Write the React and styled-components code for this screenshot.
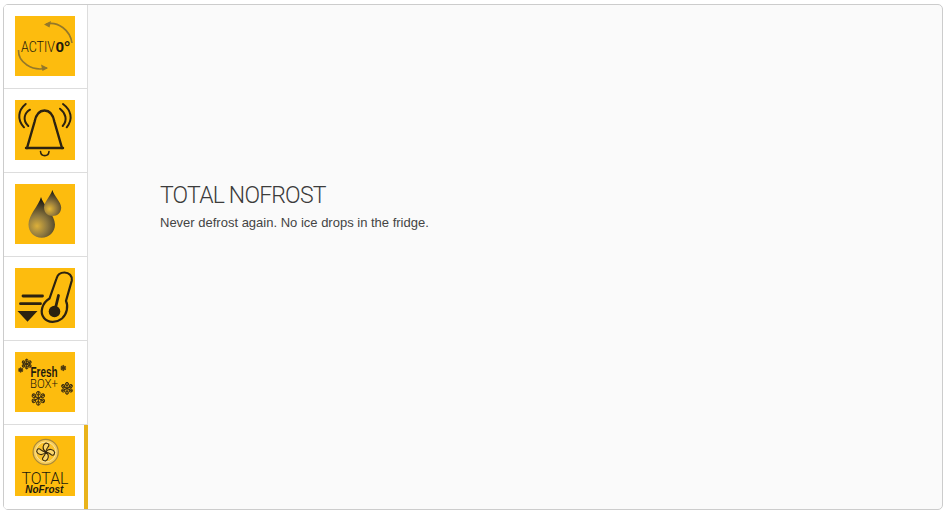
import React, { useState } from 'react';
import styled, { createGlobalStyle } from 'styled-components';

const GlobalStyle = createGlobalStyle`
  html, body {
    margin: 0;
    padding: 0;
    background: #fff;
  }
  body {
    font-family: "Liberation Sans", Arial, sans-serif;
  }
`;

const Page = styled.div`
  box-sizing: border-box;
  width: 945px;
  height: 513px;
  padding: 4px 2px 3px 3px;
`;

const Card = styled.div`
  box-sizing: border-box;
  display: flex;
  height: 100%;
  border: 1px solid #ccc;
  border-radius: 5px;
  overflow: hidden;
  background: #fafafa;
`;

const TabList = styled.div`
  display: flex;
  flex-direction: column;
  flex: none;
  width: 84px;
  background: #fff;
`;

const Tab = styled.button`
  box-sizing: border-box;
  display: flex;
  align-items: flex-start;
  flex: ${(p) => (p.$last ? '1 1 0' : 'none')};
  height: ${(p) => (p.$last ? 'auto' : '84px')};
  width: 84px;
  padding: 11px 0 0 11px;
  margin: 0;
  background: #fff;
  border: 0;
  border-bottom: ${(p) => (p.$last ? '0' : '1px solid #ddd')};
  border-right: ${(p) => (p.$active ? '4px solid #e9b31a' : '1px solid #ddd')};
  cursor: pointer;
`;

const Tile = styled.svg`
  display: block;
  flex: none;
  width: 60px;
  height: 60px;
  background: #fdbc0e;
`;

const Panel = styled.div`
  flex: 1;
  padding: 177px 0 0 72px;
`;

const Title = styled.h2`
  margin: 0 0 4px;
  font-family: "Roboto", sans-serif;
  font-weight: 300;
  font-size: 23px;
  line-height: 28px;
  letter-spacing: -0.8px;
  color: #3c3c3c;
`;

const Text = styled.p`
  margin: 0;
  font-size: 13px;
  line-height: 18px;
  color: #444;
`;

const Flake = ({ x, y, r, w = 1 }) => (
  <g transform={`translate(${x} ${y})`} stroke="#3a2c10" strokeWidth={w} fill="none">
    {[0, 60, 120].map((a) => (
      <line key={a} x1={0} y1={-r} x2={0} y2={r} transform={`rotate(${a})`} />
    ))}
    {[0, 60, 120, 180, 240, 300].map((a) => (
      <circle key={a} cx={0} cy={-r * 0.72} r={r * 0.26} transform={`rotate(${a})`} />
    ))}
  </g>
);

const ActivIcon = () => (
  <Tile viewBox="0 0 60 60">
    <g fill="none" stroke="#94782a" strokeWidth="1.6">
      <path d="M31 8 C43 5 55 14 57 27" />
      <path d="M3.5 34 C3 46 17 56 32 52" />
    </g>
    <path d="M29 8.5 L36 5 L34.5 11.5 Z" fill="#94782a" />
    <path d="M33 52 L26 48.5 L27.5 55 Z" fill="#94782a" />
    <text x="6" y="35.5" fontFamily="Roboto, sans-serif" fontWeight="300" fontSize="14.5" textLength="34" lengthAdjust="spacingAndGlyphs" fill="#1e1a0c">ACTIV</text>
    <text x="40.5" y="35.5" fontFamily="Liberation Sans, sans-serif" fontWeight="700" fontSize="15.5" fill="#1e1a0c">0°</text>
  </Tile>
);

const BellIcon = () => (
  <Tile viewBox="0 0 60 60">
    <g fill="none" stroke="#2c2210" strokeLinecap="round">
      <path strokeWidth="2.4" d="M11 48 H48" />
      <path strokeWidth="2.4" d="M12 48 L19.5 22 C21 14 25 10.5 29.5 10.5 C34 10.5 38 14 39.5 22 L47 48" />
      <path strokeWidth="1.6" d="M25.5 51.5 C26 57 33.5 57 34 51.5" />
      <path strokeWidth="2" d="M10.7 4 C3.5 10 1.5 19 9 27.3" />
      <path strokeWidth="2" d="M15 9.7 C9.5 13 7 20 13.3 26" />
      <path strokeWidth="2" d="M48 4 C56 10 58.5 19 51.7 27.3" />
      <path strokeWidth="2" d="M45 8.7 C50.5 13 53 20 47.7 26" />
    </g>
  </Tile>
);

const DropsIcon = () => (
  <Tile viewBox="0 0 60 60">
    <defs>
      <radialGradient id="dropBig" gradientUnits="userSpaceOnUse" cx="22" cy="42" r="26">
        <stop offset="0" stopColor="#dcb03a" />
        <stop offset="0.4" stopColor="#8d7840" />
        <stop offset="1" stopColor="#1f1c14" />
      </radialGradient>
      <radialGradient id="dropSmall" gradientUnits="userSpaceOnUse" cx="34.5" cy="25" r="18">
        <stop offset="0" stopColor="#e6b835" />
        <stop offset="0.4" stopColor="#93793c" />
        <stop offset="1" stopColor="#1f1c14" />
      </radialGradient>
    </defs>
    <path d="M26 13 C28 21 40 31 40 40.5 C40 48 34 53.7 26.7 53.7 C19 53.7 13.5 48 13.5 40.5 C13.5 31 23.5 22 26 13 Z" fill="url(#dropBig)" />
    <path d="M37.4 6 C39 12 46.2 18 46.2 23.5 C46.2 28.5 42.5 32 37.7 32 C32.8 32 29 28.5 29 23.5 C29 18 35.5 12 37.4 6 Z" fill="url(#dropSmall)" />
  </Tile>
);

const ThermoIcon = () => (
  <Tile viewBox="0 0 60 60">
    <g stroke="#2c2210" strokeLinecap="round" fill="none">
      <path strokeWidth="2.8" d="M8 28 H27.5" />
      <path strokeWidth="2.8" d="M5.5 35.7 H25.5" />
      <path strokeWidth="2.2" d="M41.5 10.5 C42.5 6.5 46 4.5 49.5 4.5 C54 4.5 57.5 8 56.8 12.5 L51 33 C53.5 38 52 46 47 50.5 C41.5 55 33 55 29 50 C24.5 44.5 27 35 34.5 30.5 Z" />
      <path strokeWidth="2.8" d="M40 42 L43.5 27.5" />
    </g>
    <circle cx="39.5" cy="43.5" r="5.8" fill="#2c2210" />
    <path d="M2.5 43 H22.5 L12.5 53.7 Z" fill="#2c2210" />
  </Tile>
);

const FreshIcon = () => (
  <Tile viewBox="0 0 60 60">
    <Flake x={11.7} y={12} r={5} />
    <Flake x={5.7} y={18} r={2.3} w={0.8} />
    <Flake x={48.3} y={16} r={2.7} w={0.8} />
    <Flake x={52} y={36.3} r={6} />
    <Flake x={23.3} y={46.3} r={7} />
    <text x="15.5" y="24.8" fontFamily="Liberation Sans, sans-serif" fontWeight="700" fontSize="14.5" textLength="27" lengthAdjust="spacingAndGlyphs" fill="#1e1a0c">Fresh</text>
    <text x="15" y="35.5" fontFamily="Roboto, sans-serif" fontWeight="300" fontSize="13" textLength="28" lengthAdjust="spacingAndGlyphs" fill="#1e1a0c">BOX+</text>
  </Tile>
);

const TotalIcon = () => (
  <Tile viewBox="0 0 60 60">
    <circle cx="30.7" cy="16" r="12.6" fill="#f7cc58" stroke="#a8893a" strokeWidth="1.2" />
    <circle cx="30.7" cy="16" r="10" fill="#fbc22a" stroke="#fbe39a" strokeWidth="1" />
    <g fill="#fbd66b" stroke="#3a2c10" strokeWidth="1.1">
      {[0, 90, 180, 270].map((a) => (
        <path key={a} transform={`rotate(${a} 30.7 16)`} d="M30.7 16 C26.5 13 28 8 31 7 C34.5 7.5 34.5 9.5 33 11 C31.8 12.5 31 14 30.7 16 Z" />
      ))}
    </g>
    <circle cx="30.7" cy="16" r="1.1" fill="#2c2210" />
    <text x="6.5" y="47.5" fontFamily="Roboto, sans-serif" fontWeight="300" fontSize="16.5" textLength="47" lengthAdjust="spacingAndGlyphs" fill="#1e1a0c">TOTAL</text>
    <text x="10.3" y="56.5" fontFamily="Liberation Sans, sans-serif" fontWeight="700" fontStyle="italic" fontSize="10" textLength="38" lengthAdjust="spacingAndGlyphs" fill="#1e1a0c">NoFrost</text>
  </Tile>
);

const tabs = [
  { id: 'activ', Icon: ActivIcon, title: 'ACTIV 0°', text: '' },
  { id: 'alarm', Icon: BellIcon, title: 'ALARM', text: '' },
  { id: 'drops', Icon: DropsIcon, title: 'HUMIDITY', text: '' },
  { id: 'cool', Icon: ThermoIcon, title: 'FAST COOLING', text: '' },
  { id: 'fresh', Icon: FreshIcon, title: 'FRESH BOX+', text: '' },
  { id: 'total', Icon: TotalIcon, title: 'TOTAL NOFROST', text: 'Never defrost again. No ice drops in the fridge.' },
];

export default function App() {
  const [active, setActive] = useState('total');
  const current = tabs.find((t) => t.id === active);

  return (
    <Page>
      <GlobalStyle />
      <Card>
        <TabList>
          {tabs.map(({ id, Icon }, i) => (
            <Tab key={id} $active={id === active} $last={i === tabs.length - 1} onClick={() => setActive(id)}>
              <Icon />
            </Tab>
          ))}
        </TabList>
        <Panel>
          <Title>{current.title}</Title>
          <Text>{current.text}</Text>
        </Panel>
      </Card>
    </Page>
  );
}
